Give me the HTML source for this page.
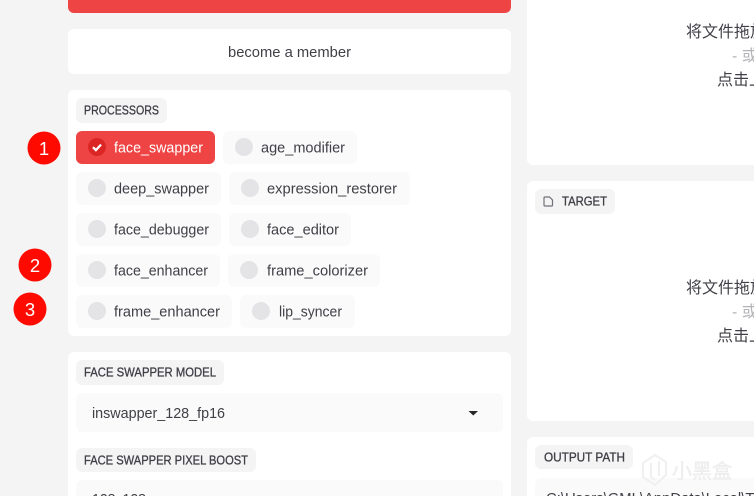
<!DOCTYPE html>
<html lang="zh">
<head>
<meta charset="utf-8">
<style>
html,body{margin:0;padding:0;width:754px;height:496px;overflow:hidden;background:#f4f4f4}
svg{display:block}
text{font-family:"Liberation Sans","Noto Sans CJK SC",sans-serif;fill:#3f3f46}
.m{font-size:15px}
.l{font-size:12.5px;fill:#3f3f46;stroke:#3f3f46;stroke-width:.3px}
.c{font-size:16px}
.chip{fill:#fafafa}
.dot{fill:#e4e4e7}
.lab{fill:#f4f4f5}
.card{fill:#fff}
.n{font-size:18.500px;fill:#fff}
</style>
</head>
<body>
<svg width="754" height="496" viewBox="0 0 754 496" xmlns="http://www.w3.org/2000/svg">
<!-- left column -->
<path d="M68 0H511V7a6 6 0 0 1-6 6H74a6 6 0 0 1-6-6z" fill="#ef4444"/>
<rect class="card" x="68" y="29" width="443" height="45" rx="6"/>
<text class="m" x="228" y="57" textLength="123" lengthAdjust="spacingAndGlyphs">become a member</text>

<rect class="card" x="68" y="90" width="443" height="246" rx="6"/>
<rect class="lab" x="76" y="98" width="91" height="25" rx="6"/>
<text class="l" x="84" y="114.500" textLength="75" lengthAdjust="spacingAndGlyphs">PROCESSORS</text>

<rect x="76" y="131" width="139" height="33" rx="6" fill="#ef4444"/>
<circle cx="97" cy="147" r="9" fill="#dc2626"/>
<path d="M93 147.200l2.900 2.900 5.100-5.500" fill="none" stroke="#fff" stroke-width="2.300"/>
<text class="m" x="114" y="152.500" textLength="89" lengthAdjust="spacingAndGlyphs" style="fill:#fff">face_swapper</text>

<rect class="chip" x="223" y="131" width="134" height="33" rx="6"/>
<circle class="dot" cx="244" cy="147" r="9"/>
<text class="m" x="261" y="152.500" textLength="84" lengthAdjust="spacingAndGlyphs">age_modifier</text>

<rect class="chip" x="76" y="172" width="145" height="33" rx="6"/>
<circle class="dot" cx="97" cy="188" r="9"/>
<text class="m" x="114" y="193.500" textLength="95" lengthAdjust="spacingAndGlyphs">deep_swapper</text>
<rect class="chip" x="229" y="172" width="181" height="33" rx="6"/>
<circle class="dot" cx="250" cy="188" r="9"/>
<text class="m" x="267" y="193.500" textLength="130" lengthAdjust="spacingAndGlyphs">expression_restorer</text>

<rect class="chip" x="76" y="213" width="145" height="33" rx="6"/>
<circle class="dot" cx="97" cy="229" r="9"/>
<text class="m" x="114" y="234.500" textLength="95" lengthAdjust="spacingAndGlyphs">face_debugger</text>
<rect class="chip" x="229" y="213" width="122" height="33" rx="6"/>
<circle class="dot" cx="250" cy="229" r="9"/>
<text class="m" x="267" y="234.500" textLength="72" lengthAdjust="spacingAndGlyphs">face_editor</text>

<rect class="chip" x="76" y="254" width="144" height="33" rx="6"/>
<circle class="dot" cx="97" cy="270" r="9"/>
<text class="m" x="114" y="275.500" textLength="94" lengthAdjust="spacingAndGlyphs">face_enhancer</text>
<rect class="chip" x="228" y="254" width="152" height="33" rx="6"/>
<circle class="dot" cx="249" cy="270" r="9"/>
<text class="m" x="267" y="275.500" textLength="101" lengthAdjust="spacingAndGlyphs">frame_colorizer</text>

<rect class="chip" x="76" y="295" width="156" height="33" rx="6"/>
<circle class="dot" cx="97" cy="311" r="9"/>
<text class="m" x="114" y="316.500" textLength="106" lengthAdjust="spacingAndGlyphs">frame_enhancer</text>
<rect class="chip" x="240" y="295" width="115" height="33" rx="6"/>
<circle class="dot" cx="261" cy="311" r="9"/>
<text class="m" x="279" y="316.500" textLength="63" lengthAdjust="spacingAndGlyphs">lip_syncer</text>

<path class="card" d="M68 496V358a6 6 0 0 1 6-6H505a6 6 0 0 1 6 6V496z"/>
<rect class="lab" x="76" y="360" width="148" height="25" rx="6"/>
<text class="l" x="84" y="376.500" textLength="132" lengthAdjust="spacingAndGlyphs">FACE SWAPPER MODEL</text>
<rect class="chip" x="76" y="393" width="427" height="39" rx="6"/>
<text class="m" x="92" y="418" textLength="133" lengthAdjust="spacingAndGlyphs">inswapper_128_fp16</text>
<path d="M468.500 411h9.500l-4.750 4.500z" fill="#27272a"/>
<rect class="lab" x="76" y="448" width="180" height="24" rx="6"/>
<text class="l" x="84" y="464.500" textLength="164" lengthAdjust="spacingAndGlyphs">FACE SWAPPER PIXEL BOOST</text>
<path class="chip" d="M76 496V486a6 6 0 0 1 6-6H497a6 6 0 0 1 6 6V496z"/>
<text class="m" x="92" y="504" textLength="54" lengthAdjust="spacingAndGlyphs">128x128</text>

<!-- right column -->
<path class="card" d="M527 0H754V165H533a6 6 0 0 1-6-6z"/>
<text class="c" x="686" y="37">将文件拖放到此处</text>
<text class="c" x="732" y="61" style="fill:#b4b4b8">- 或</text>
<text class="c" x="717" y="85">点击上传</text>

<path class="card" d="M754 181H533a6 6 0 0 0-6 6V415a6 6 0 0 0 6 6H754z"/>
<rect class="lab" x="535" y="189" width="80" height="25" rx="6"/>
<path d="M545 197h4.500l3 3v5a1 1 0 0 1-1 1h-6.500a1 1 0 0 1-1-1v-7a1 1 0 0 1 1-1z" fill="none" stroke="#71717a" stroke-width="1.200"/>
<text class="l" x="562" y="205.500" textLength="45" lengthAdjust="spacingAndGlyphs">TARGET</text>
<text class="c" x="686" y="293">将文件拖放到此处</text>
<text class="c" x="732" y="317" style="fill:#b4b4b8">- 或</text>
<text class="c" x="717" y="341">点击上传</text>

<path class="card" d="M754 437H533a6 6 0 0 0-6 6V496H754z"/>
<rect class="lab" x="535" y="445" width="98" height="24" rx="6"/>
<text class="l" x="544" y="461.500" textLength="81" lengthAdjust="spacingAndGlyphs">OUTPUT PATH</text>
<path class="chip" d="M754 478H541a6 6 0 0 0-6 6V496H754z"/>
<text class="m" x="546" y="503" textLength="215" lengthAdjust="spacingAndGlyphs">C:\Users\GML\AppData\Local\Te</text>

<!-- watermark -->
<path d="M643 463l12-8 11 7v13l-11 10-12-8zM651 463v14l4 3M659 461v15" fill="none" stroke="#f0f0f0" stroke-width="2"/>
<text x="672" y="478" textLength="60" style="font-size:20px;fill:#f1f1f1;stroke:#e9e9e9;stroke-width:.4px">小黑盒</text>

<!-- annotation badges -->
<circle cx="44" cy="148" r="16.500" fill="#fe0a00"/>
<text class="n" x="44" y="155" text-anchor="middle">1</text>
<circle cx="35" cy="265" r="16.500" fill="#fe0a00"/>
<text class="n" x="35" y="272" text-anchor="middle">2</text>
<circle cx="30" cy="309" r="16.500" fill="#fe0a00"/>
<text class="n" x="30" y="316" text-anchor="middle">3</text>
</svg>
</body>
</html>
